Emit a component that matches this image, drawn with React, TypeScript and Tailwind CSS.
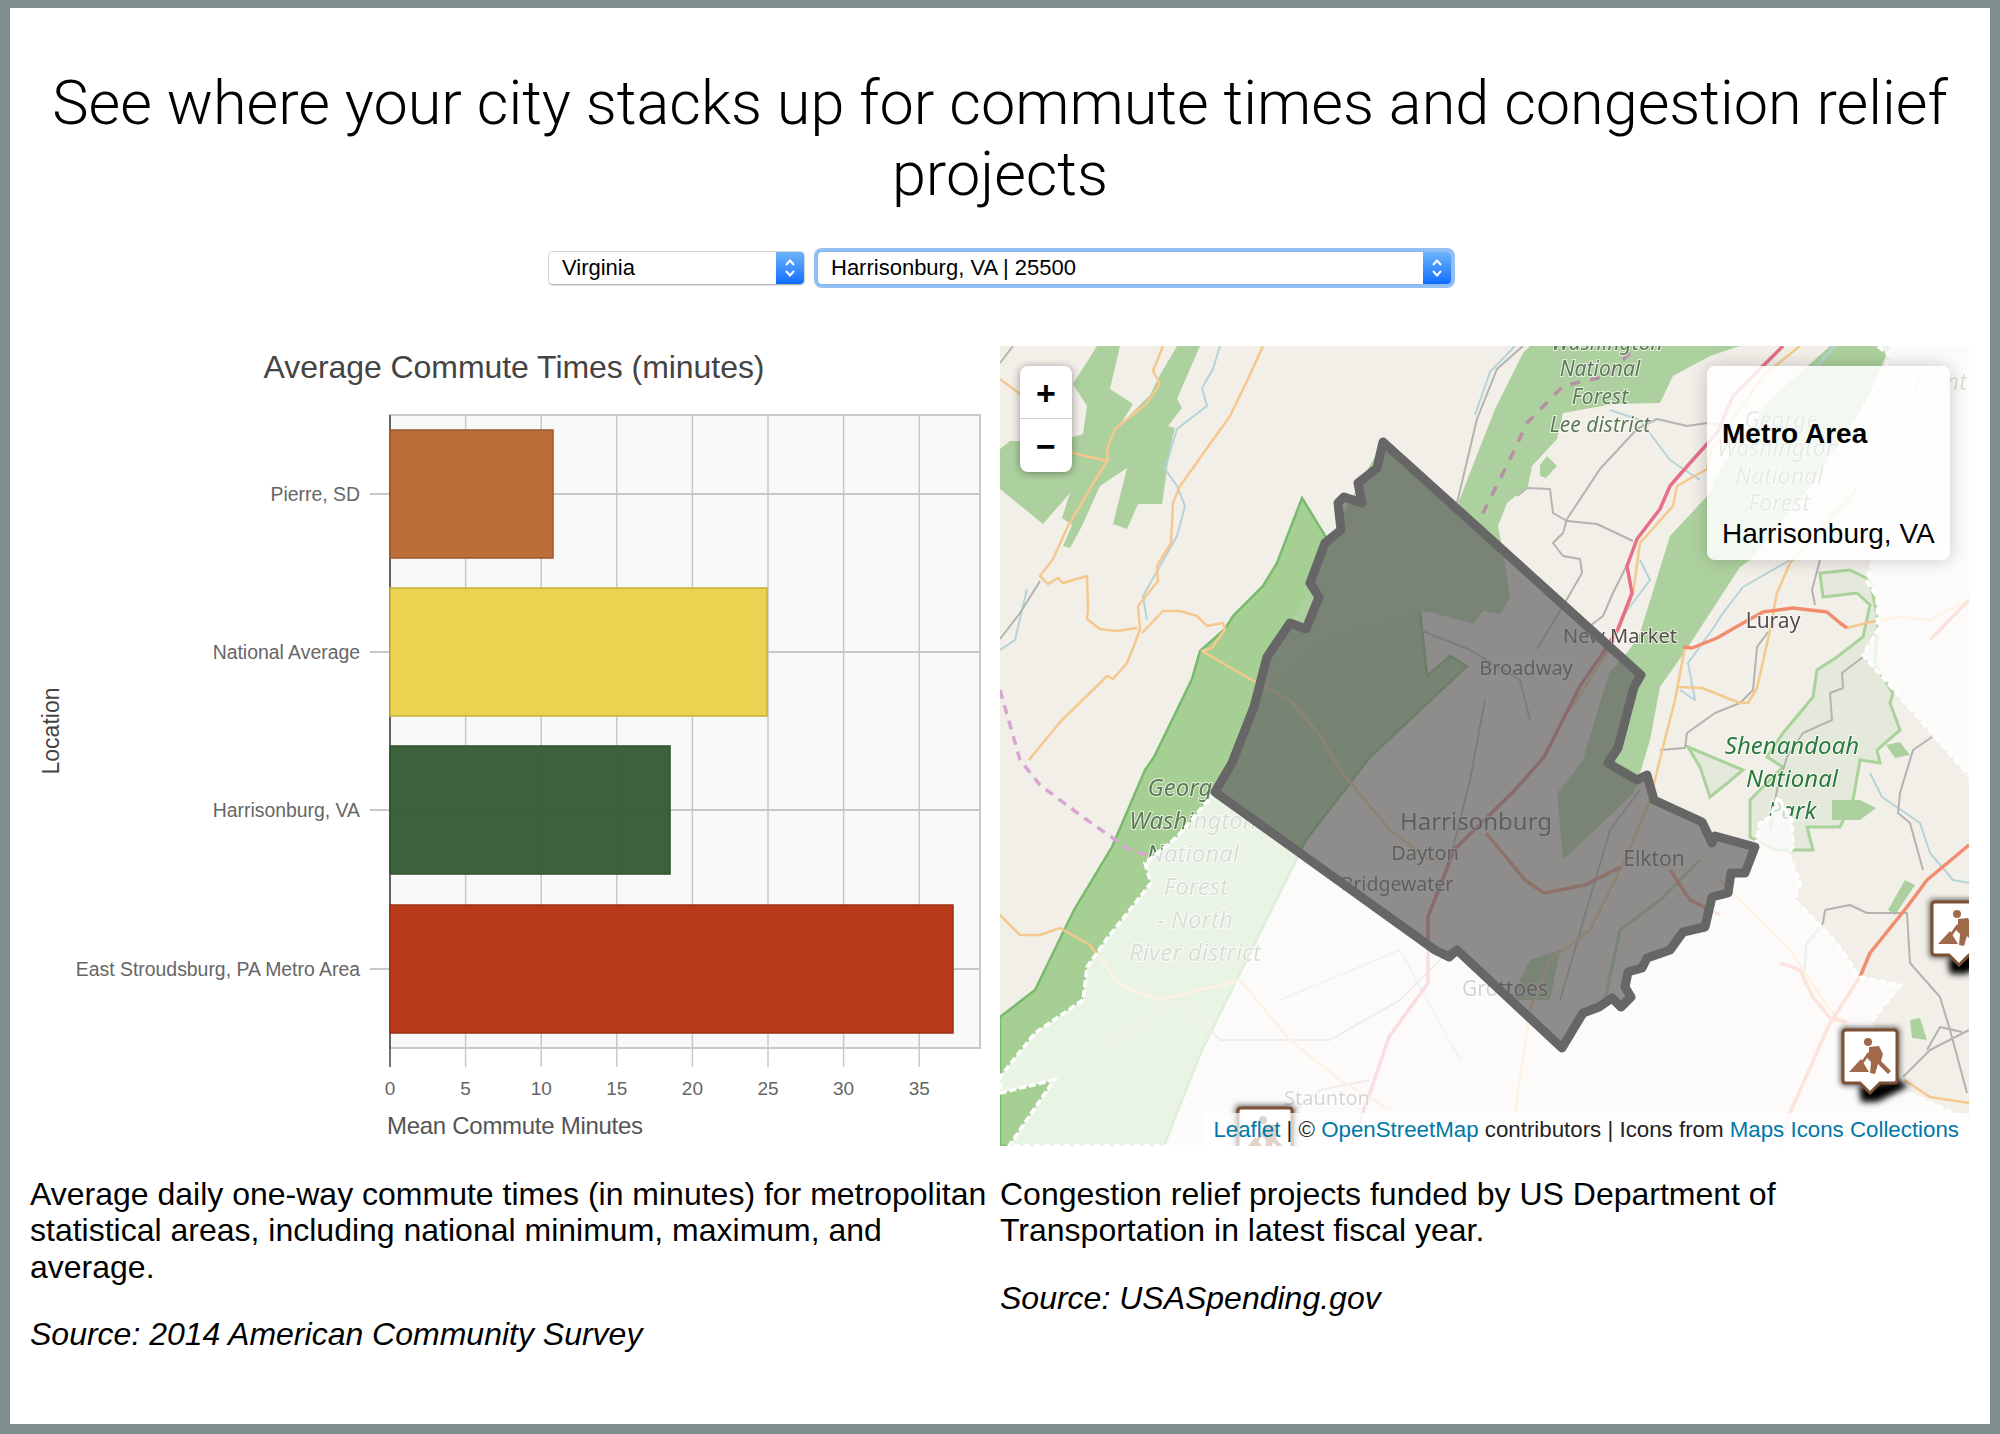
const sans = "font-['Liberation_Sans',Arial,sans-serif]";

const xTicks = [0, 5, 10, 15, 20, 25, 30, 35];
const rowLines = [494, 652, 810, 969];

const bars = [
  { label: "Pierre, SD", top: 430, right: 553, fill: "#b86832", stroke: "#9c5a2c" },
  { label: "National Average", top: 588, right: 767, fill: "#ebd34c", stroke: "#c7b03c" },
  { label: "Harrisonburg, VA", top: 746, right: 670, fill: "#355d34", stroke: "#2f5230" },
  { label: "East Stroudsburg, PA Metro Area", top: 905, right: 953, fill: "#b73414", stroke: "#9c2f14" },
];

function xPos(v: number) {
  return 390 + v * 15.12;
}

// chart is drawn in page coordinates, column starts at x=10
function CommuteChart() {
  return (
    <svg viewBox="10 346 990 800" className="w-[990px] h-[800px] block" fontFamily="'Liberation Sans', Arial, sans-serif">
      <text x="514" y="378" fontSize="32" fill="#444" textAnchor="middle" textLength="501">
        Average Commute Times (minutes)
      </text>
      <rect x="390" y="415" width="590" height="633" fill="#f9f9f9" stroke="#c8c8c8" strokeWidth="2" />
      {xTicks.slice(1).map((t) => (
        <line key={t} x1={xPos(t)} x2={xPos(t)} y1="415" y2="1067" stroke="#c8c8c8" strokeWidth="1.5" />
      ))}
      {rowLines.map((y) => (
        <line key={y} x1="370" x2="980" y1={y} y2={y} stroke="#c8c8c8" strokeWidth="2" />
      ))}
      <line x1="390" x2="390" y1="415" y2="1067" stroke="#444" strokeWidth="1.5" />
      {bars.map((b) => (
        <rect
          key={b.label}
          x="390"
          y={b.top}
          width={b.right - 390}
          height="128"
          fill={b.fill}
          fillOpacity="0.97"
          stroke={b.stroke}
          strokeWidth="1.5"
        />
      ))}
      {bars.map((b, i) => (
        <text key={b.label} x="360" y={rowLines[i] + 7} fontSize="19.4" fill="#666" textAnchor="end">
          {b.label}
        </text>
      ))}
      {xTicks.map((t) => (
        <text key={t} x={xPos(t)} y="1095" fontSize="19" fill="#666" textAnchor="middle">
          {t}
        </text>
      ))}
      <text x="387" y="1134" fontSize="24" fill="#555" textLength="256">
        Mean Commute Minutes
      </text>
      <text transform="translate(59 731) rotate(-90)" fontSize="23" fill="#444" textAnchor="middle">
        Location
      </text>
    </svg>
  );
}

const metroArea =
  "M1383,442 L1641,675 L1634,687 L1618,748 L1608,763 L1637,780 L1647,775 L1654,800 L1702,822 L1712,843 L1715,836 L1755,847 L1745,873 L1731,873 L1728,893 L1712,897 L1705,927 L1683,932 L1670,950 L1647,958 L1642,968 L1628,972 L1625,987 L1631,997 L1621,1007 L1612,998 L1599,1007 L1583,1013 L1562,1048 L1457,950 L1449,957 L1435,950 L1215,792 L1232,763 L1254,707 L1267,657 L1290,623 L1306,629 L1319,597 L1310,583 L1325,543 L1341,530 L1338,503 L1344,497 L1362,503 L1358,483 L1377,468 Z";

const washedOut =
  "M1215,792 L1177,837 L1145,863 L1151,883 L1106,940 L1087,967 L1083,1000 L1035,1033 L1000,1077 L1000,1093 L1054,1080 L1009,1146 L1969,1146 L1969,1120 L1910,1093 L1870,1023 L1900,985 L1860,977 L1834,940 L1795,900 L1800,883 L1788,853 L1793,847 L1792,820 L1778,797 L1770,817 L1760,823 L1755,847 L1745,873 L1731,873 L1728,893 L1712,897 L1705,927 L1683,932 L1670,950 L1647,958 L1642,968 L1628,972 L1625,987 L1631,997 L1621,1007 L1612,998 L1599,1007 L1583,1013 L1562,1048 L1457,950 L1449,957 L1435,950 Z";

const washedEast =
  "M1870,340 L1890,356 L1880,380 L1863,409 L1845,440 L1827,463 L1853,486 L1872,500 L1873,560 L1867,582 L1877,597 L1878,630 L1863,655 L1975,782 L1975,340 Z";

const westBand =
  "M1302,498 L1346,570 L1380,600 L1420,611 L1427,676 L1450,656 L1467,666 L1370,757 L1306,840 L1202,1050 L1164,1146 L1000,1146 L1000,1017 L1035,990 L1074,910 L1112,847 L1145,770 L1154,757 L1192,679 L1200,651 L1225,629 L1233,616 L1263,586 L1277,563 Z";

const forests = [
  // metro area's northern half is all forest
  "M1383,442 L1445,500 L1502,546 L1510,598 L1500,614 L1483,611 L1473,624 L1433,613 L1420,611 L1320,640 L1250,700 L1325,560 L1345,510 Z",
  // centre band from the top edge
  "M1523,353 L1530,346 L1740,346 L1710,356 L1673,376 L1660,403 L1613,404 L1563,413 L1557,439 L1532,466 L1528,486 L1507,503 L1498,526 L1502,546 L1510,598 L1460,540 L1457,506 L1495,409 Z",
  // eastern band, runs on under the legend
  "M1710,493 L1720,470 L1770,400 L1830,346 L1890,346 L1863,409 L1827,463 L1800,500 L1750,560 L1740,567 L1686,650 L1660,687 L1650,740 L1634,793 L1563,860 L1557,793 L1583,760 L1609,673 L1630,649 L1640,633 L1670,536 Z",
  // north-west patches
  "M1097,346 L1120,346 L1110,389 L1133,404 L1120,425 L1150,395 L1160,375 L1177,346 L1200,346 L1177,399 L1182,408 L1168,426 L1175,428 L1170,449 L1162,504 L1138,504 L1127,529 L1113,524 L1127,468 L1100,486 L1082,526 L1070,548 L1063,546 L1072,525 L1062,518 L1070,493 L1043,524 L1000,489 L1000,449 L1010,441 L1060,441 L1083,434 L1087,406 L1073,384 Z",
  "M1547,456 L1557,466 L1546,478 L1540,476 L1540,465 Z",
  "M1832,800 L1860,800 L1876,808 L1860,820 L1832,820 Z",
  "M1886,745 L1900,742 L1910,755 L1895,758 Z",
  "M1888,910 L1905,880 L1915,885 L1895,915 Z",
  "M1910,1020 L1920,1018 L1927,1040 L1912,1038 Z",
];

const parkTint = [
  "M1820,573 L1823,597 L1857,593 L1870,605 L1863,637 L1837,657 L1817,670 L1813,697 L1783,733 L1767,757 L1783,767 L1750,800 L1750,837 L1775,850 L1813,850 L1807,827 L1840,827 L1853,800 L1860,760 L1880,763 L1877,750 L1900,730 L1890,703 L1893,693 L1875,665 L1878,620 L1870,580 L1850,570 Z",
  "M1688,747 L1743,770 L1725,785 L1710,797 L1700,767 Z",
];

const orangeRoads = [
  "M1263,346 L1248,379 L1230,416 L1200,458 L1180,486 L1173,503 L1171,543 L1157,566 L1158,581 L1138,606 L1140,629 L1135,643 L1127,663 L1113,679 L1107,676 L1097,686 L1060,722 L1029,760",
  "M1163,346 L1153,371 L1160,384 L1147,403 L1115,429 L1107,449 L1108,459 L1090,489 L1068,526 L1053,559 L1040,576 L1048,584 L1058,578 L1063,583 L1087,576 L1088,609 L1087,619 L1100,629 L1117,631 L1137,628",
  "M1000,379 L1020,394 L1073,453 L1107,461",
  "M1142,633 L1163,611 L1180,611 L1197,616 L1207,626 L1223,623 L1225,629 L1212,648 L1202,651 L1250,679 L1290,700 L1320,735 L1340,770 L1390,830 L1430,860",
  "M1800,346 L1763,376 L1710,453 L1707,469 L1677,486 L1673,506 L1640,543 L1633,593 L1620,626 L1607,653 L1570,710",
  "M1685,647 L1675,700 L1663,747 L1650,800 L1625,860 L1590,930 L1550,960 L1530,1010 L1510,1146",
  "M1677,687 L1702,688 L1740,703 L1748,703 L1757,688 L1770,630 L1777,593 L1790,563 L1857,489 L1890,450",
  "M1847,628 L1870,622 L1900,617 L1930,620 L1969,600",
  "M1000,915 L1020,935 L1040,935 L1060,928 L1090,945 L1120,985 L1160,1000 L1240,980 L1290,1040 L1340,1080 L1390,1110",
  "M1720,880 L1790,950 L1830,1010 L1880,1060",
  "M1900,1077 L1930,1097 L1969,1103",
];

const redRoads = [
  "M1683,647 L1692,648 L1717,638 L1743,623 L1763,612 L1793,608 L1827,612 L1840,623 L1847,628",
  "M1486,833 L1525,880 L1544,893 L1585,885 L1621,867",
  "M1969,845 L1927,880 L1907,907 L1870,953 L1860,977 L1830,1023 L1790,1113 L1780,1146",
  "M1670,870 L1690,900 L1720,915",
  "M1780,963 L1800,970 L1813,997 L1830,1018 L1847,1022",
  "M1930,640 L1969,600",
];

const grayRoads = [
  "M1733,426 L1707,423 L1687,426 L1657,419 L1637,429 L1600,469 L1567,519 L1563,533 L1553,543 L1563,556 L1580,559 L1582,573 L1563,606 L1537,649",
  "M1517,496 L1527,488 L1550,489 L1553,513 L1567,521 L1597,524 L1633,541",
  "M1523,346 L1497,369 L1477,419 L1457,503",
  "M1630,559 L1613,593 L1603,616 L1590,626",
  "M1820,560 L1812,590 L1815,605",
  "M1768,632 L1757,647 L1753,690 L1740,703 L1715,713 L1687,733 L1685,748 L1660,750",
  "M1863,657 L1842,673 L1843,688 L1830,693 L1832,720 L1803,733 L1787,757 L1777,790 L1770,830",
  "M1932,737 L1913,750 L1900,793 L1898,813 L1910,823 L1923,870",
  "M1040,581 L1020,613 L1000,639",
  "M1013,346 L1000,363",
  "M1825,910 L1850,905 L1867,913 L1907,913 L1910,963 L1940,997 L1950,1030 L1967,1093",
  "M1825,910 L1823,923 L1806,945 L1804,985",
  "M1962,1032 L1940,1027 L1927,1050",
  "M1969,1030 L1930,1050 L1903,1077",
  "M1420,630 L1470,650 L1520,680 L1530,720",
  "M1100,1050 L1180,1000 L1220,1040 L1330,1040 L1400,1000 L1450,950",
  "M1250,1146 L1320,1090 L1370,1080",
  "M1560,1000 L1610,830 L1640,790",
  "M1485,700 L1470,780 L1450,860",
];

const riverLines = [
  "M1220,346 L1213,369 L1202,388 L1207,406 L1177,429 L1165,469 L1177,486 L1185,506 L1177,536 L1143,596 L1147,620",
  "M1027,589 L1015,640 L1000,650",
  "M1515,346 L1490,372 L1475,415",
  "M1610,410 L1640,420 L1670,460 L1700,480",
  "M1743,587 L1723,613 L1712,630 L1688,663 L1695,700 L1680,690",
  "M1790,560 L1743,587",
  "M1870,773 L1882,797 L1920,823 L1930,853 L1953,880 L1970,883",
  "M1280,1000 L1400,950 L1460,1060",
  "M1640,560 L1650,580 L1620,620",
  "M1835,346 L1800,385 L1770,400 L1745,450 L1715,480",
];

const mapLabels: { t: string; x: number; y: number; size?: number; green?: boolean; italic?: boolean }[] = [
  { t: "Washington", x: 1607, y: 350, italic: true },
  { t: "National", x: 1600, y: 376, italic: true },
  { t: "Forest", x: 1600, y: 404, italic: true },
  { t: "Lee district", x: 1600, y: 432, italic: true },
  { t: "George", x: 1781, y: 428, size: 23, italic: true },
  { t: "Washington", x: 1778, y: 456, size: 23, italic: true },
  { t: "National", x: 1779, y: 484, size: 23, italic: true },
  { t: "Forest", x: 1779, y: 511, size: 23, italic: true },
  { t: "Front", x: 1940, y: 390, size: 23, italic: true },
  { t: "New Market", x: 1620, y: 643, size: 20 },
  { t: "Luray", x: 1773, y: 628 },
  { t: "Broadway", x: 1526, y: 675, size: 20 },
  { t: "Shenandoah", x: 1792, y: 754, size: 24, green: true, italic: true },
  { t: "National", x: 1792, y: 787, size: 24, green: true, italic: true },
  { t: "Park", x: 1792, y: 819, size: 24, green: true, italic: true },
  { t: "George", x: 1186, y: 796, size: 24, italic: true },
  { t: "Washington", x: 1193, y: 829, size: 24, italic: true },
  { t: "National", x: 1193, y: 862, size: 24, italic: true },
  { t: "Forest", x: 1196, y: 895, size: 24, italic: true },
  { t: "- North", x: 1195, y: 928, size: 24, italic: true },
  { t: "River district", x: 1195, y: 961, size: 24, italic: true },
  { t: "Harrisonburg", x: 1476, y: 830, size: 24 },
  { t: "Dayton", x: 1425, y: 860, size: 20 },
  { t: "Bridgewater", x: 1397, y: 891, size: 19.5 },
  { t: "Elkton", x: 1654, y: 866 },
  { t: "Grottoes", x: 1505, y: 996 },
  { t: "Staunton", x: 1327, y: 1105, size: 20 },
];

function RoadWorksPin({ x, y }: { x: number; y: number }) {
  return (
    <g transform={`translate(${x} ${y})`}>
      <rect x="-2" y="-2" width="58" height="57" fill="#000" fillOpacity="0.75" filter="url(#pinShadow)" />
      <path d="M16,56 L56,50 L66,56 L34,72 L18,72 Z" fill="#000" filter="url(#pinShadow)" />
      <path
        d="M3,0 H51 Q54,0 54,3 V50 Q54,53 51,53 H37 L27,63 L17,53 H3 Q0,53 0,50 V3 Q0,0 3,0 Z"
        fill="#fff"
        stroke="#7d5034"
        strokeWidth="3"
      />
      <g fill="#a06a4a">
        <circle cx="25" cy="12" r="4" />
        <path d="M26,17 L36,16 L40,24 L38,31 L48,41 L45,44 L35,34 L32,44 L27,43 L28,32 L24,28 L26,22 Z" />
        <path d="M6,42 L18,29 L26,42 Z" />
        <path d="M18,32 L25,22 L27,24 L20,34 Z" />
      </g>
    </g>
  );
}

function MapArt() {
  return (
    <svg viewBox="1000 346 969 800" className="w-full h-full block" fontFamily="'Noto Sans', sans-serif">
      <defs>
        <filter id="pinShadow" x="-50%" y="-50%" width="200%" height="200%">
          <feGaussianBlur stdDeviation="3" />
        </filter>
        <filter id="tileBlur">
          <feGaussianBlur stdDeviation="0.6" />
        </filter>
      </defs>
      <g filter="url(#tileBlur)">
        <rect x="1000" y="346" width="969" height="800" fill="#f2efe9" />
        {parkTint.map((d) => (
          <path key={d} d={d} fill="#e5e9dc" stroke="#a9d39b" strokeWidth="3" />
        ))}
        <path d={westBand} fill="#a6cf93" stroke="#78bb6c" strokeWidth="2.5" />
        {forests.map((d) => (
          <path key={d} d={d} fill="#add19e" />
        ))}
        <path d="M1700,860 L1660,900 L1620,930 L1605,1000" fill="none" stroke="#a9d39b" strokeWidth="3" />
        <path d="M1510,1000 L1530,960 L1560,950 L1550,1000 Z" fill="#add19e" />
        {riverLines.map((d) => (
          <path key={d} d={d} fill="none" stroke="#b5d3d9" strokeWidth="2" strokeLinejoin="round" />
        ))}
        {grayRoads.map((d) => (
          <path key={d} d={d} fill="none" stroke="#b5b3af" strokeWidth="2" strokeLinejoin="round" />
        ))}
        {orangeRoads.map((d) => (
          <path key={d} d={d} fill="none" stroke="#f5c88e" strokeWidth="2.5" strokeLinejoin="round" />
        ))}
        <path
          d="M1000,690 L1020,760 L1040,785 L1080,815 L1130,850 L1170,862"
          fill="none"
          stroke="#d8a6d0"
          strokeWidth="3.5"
          strokeDasharray="9 7"
        />
        <path
          d="M1630,353 L1607,376 L1563,386 L1527,423 L1513,453 L1480,519"
          fill="none"
          stroke="#b98fa6"
          strokeWidth="3.5"
          strokeDasharray="10 10"
        />
        {redRoads.map((d) => (
          <path key={d} d={d} fill="none" stroke="#f28c6e" strokeWidth="3.5" strokeLinejoin="round" />
        ))}
        <path
          d="M1783,346 L1733,396 L1717,433 L1690,463 L1670,486 L1660,509 L1637,539 L1627,566 L1632,593 L1618,629 L1603,653 L1580,686 L1544,757 L1515,790 L1454,850 L1428,917 L1428,983 L1389,1037 L1370,1093 L1350,1146"
          fill="none"
          stroke="#e66f87"
          strokeWidth="3.5"
          strokeLinejoin="round"
        />
        {mapLabels.map((l) => (
          <text
            key={l.t + l.x}
            x={l.x}
            y={l.y}
            fontSize={l.size ?? 21}
            textAnchor="middle"
            fontStyle={l.italic ? "italic" : "normal"}
            fill={l.green ? "#2c7a3b" : l.italic ? "#5f7a58" : "#544c48"}
            stroke="#fff"
            strokeOpacity="0.7"
            strokeWidth="2"
            paintOrder="stroke"
          >
            {l.t}
          </text>
        ))}
      </g>
      <path d={washedOut} fill="#fff" fillOpacity="0.76" stroke="#fff" strokeWidth="3.5" strokeDasharray="7 3" />
      <path d={washedEast} fill="#fff" fillOpacity="0.76" stroke="#fff" strokeWidth="3.5" strokeDasharray="7 3" />
      <path d={metroArea} fill="#666" fillOpacity="0.72" stroke="#666" strokeWidth="9" strokeLinejoin="round" />
      <RoadWorksPin x={1843} y={1030} />
      <RoadWorksPin x={1932} y={902} />
      <RoadWorksPin x={1238} y={1108} />
    </svg>
  );
}

function SelectBox({ value, width, focused }: { value: string; width: string; focused?: boolean }) {
  return (
    <div
      className={`${width} h-[34px] flex items-stretch bg-white rounded-[5px] border ${
        focused
          ? "border-[#8ab6ee] shadow-[0_0_0_3px_#93bff3]"
          : "border-[#d4d4d4] border-b-[#b5b5b5] shadow-[0_1px_1px_rgba(0,0,0,0.1)]"
      }`}
    >
      <span className="flex-1 pl-[13px] text-[22px] leading-[32px] text-black">{value}</span>
      <span className="w-[28px] flex items-center justify-center rounded-r-[4px] bg-gradient-to-b from-[#6cb3fa] to-[#0a6cff]">
        <svg viewBox="0 0 14 22" className="w-[14px] h-[22px]" fill="none" stroke="#fff" strokeWidth="2">
          <path d="M3 8 L7 3.5 L11 8" />
          <path d="M3 14 L7 18.5 L11 14" />
        </svg>
      </span>
    </div>
  );
}

export default function App() {
  return (
    <div className={`w-[2000px] h-[1434px] border-x-[10px] border-t-[8px] border-b-[10px] border-[#7f8d8d] bg-white text-black ${sans}`}>
      <h1 className="pt-[60px] px-[20px] text-center text-[61.2px] leading-[71px] font-['Roboto',sans-serif] font-light">
        See where your city stacks up for commute times and congestion relief projects
      </h1>
      <div className="mt-[41px] flex justify-center gap-[12px]">
        <SelectBox value="Virginia" width="w-[257px]" />
        <SelectBox value="Harrisonburg, VA | 25500" width="w-[635px]" focused />
      </div>
      <div className="mt-[61px] grid grid-cols-[990px_969px]">
        <CommuteChart />
        <div className="relative h-[800px] overflow-hidden">
          <MapArt />
          <div className="absolute left-[20px] top-[20px] w-[52px] rounded-[8px] bg-white shadow-[0_1px_8px_rgba(0,0,0,0.4)] font-bold text-[34px] leading-[54px] text-center">
            <div className="h-[53px] border-b border-[#ccc]">+</div>
            <div className="h-[53px]">−</div>
          </div>
          <div className="absolute left-[707px] top-[20px] w-[243px] h-[194px] px-[15px] pt-[52px] rounded-[8px] bg-white/85 shadow-[0_0_18px_rgba(0,0,0,0.2)] text-[28px] leading-[32px]">
            <div className="font-bold">Metro Area</div>
            <div className="mt-[68px] whitespace-nowrap">Harrisonburg, VA</div>
          </div>
          <div className="absolute right-0 bottom-0 px-[10px] h-[33px] bg-white/70 text-[22.3px] leading-[33px] text-[#222] whitespace-nowrap">
            <span className="text-[#0078a8]">Leaflet</span> | © <span className="text-[#0078a8]">OpenStreetMap</span> contributors | Icons from{" "}
            <span className="text-[#0078a8]">Maps Icons Collections</span>
          </div>
        </div>
      </div>
      <div className="mt-[30px] grid grid-cols-[990px_969px] text-[32px] leading-[36.4px]">
        <div className="pl-[20px]">
          <p>Average daily one-way commute times (in minutes) for metropolitan statistical areas, including national minimum, maximum, and average.</p>
          <p className="mt-[31px] italic">Source: 2014 American Community Survey</p>
        </div>
        <div>
          <p>Congestion relief projects funded by US Department of Transportation in latest fiscal year.</p>
          <p className="mt-[31px] italic">Source: USASpending.gov</p>
        </div>
      </div>
    </div>
  );
}
